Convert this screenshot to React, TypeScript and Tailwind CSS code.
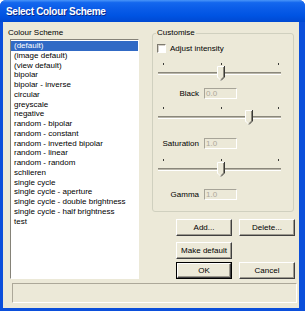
import React from "react";

const items = [
  "(default)",
  "(image default)",
  "(view default)",
  "bipolar",
  "bipolar - inverse",
  "circular",
  "greyscale",
  "negative",
  "random - bipolar",
  "random - constant",
  "random - inverted bipolar",
  "random - linear",
  "random - random",
  "schlieren",
  "single cycle",
  "single cycle - aperture",
  "single cycle - double brightness",
  "single cycle - half brightness",
  "test",
];

function Thumb({ className }: { className: string }) {
  return (
    <svg className={`absolute top-[4px] ${className}`} width="8" height="15" viewBox="0 0 8 15">
      <polygon points="0.5,0.5 7.5,0.5 7.5,11 4,14.5 0.5,11" fill="#ECE9D8" />
      <polyline points="0.5,11.5 0.5,0.5 7,0.5" fill="none" stroke="#ffffff" strokeWidth="1" />
      <polyline points="0.5,11 4,14.5" fill="none" stroke="#ffffff" strokeWidth="1" />
      <polyline points="6.5,1 6.5,11 4,13.5" fill="none" stroke="#8a877b" strokeWidth="1" />
      <polyline points="7.5,0 7.5,11 4,14.5" fill="none" stroke="#3a3a36" strokeWidth="1" />
    </svg>
  );
}

function Slider({ thumbClass }: { thumbClass: string }) {
  return (
    <div className="relative ml-[5px] h-[20px] w-[123px] shrink-0">
      <div className="absolute left-[5px] top-[1px] h-[2px] w-[1px] bg-[#3c3c38]" />
      <div className="absolute left-[63px] top-[1px] h-[2px] w-[1px] bg-[#3c3c38]" />
      <div className="absolute left-[120px] top-[1px] h-[2px] w-[1px] bg-[#3c3c38]" />
      <div className="absolute left-0 right-0 top-[10px] h-[3px] border-t border-t-[#8a877b] border-b border-b-white bg-[#b9b6a9]" />
      <Thumb className={thumbClass} />
    </div>
  );
}

function ValueRow({ label, value, className }: { label: string; value: string; className: string }) {
  return (
    <div className={`flex h-[11px] items-center ${className}`}>
      <div className="w-[46px] text-right leading-[10px]">{label}</div>
      <div className="ml-[5px] flex h-[11px] w-[33px] items-center border-t border-l border-t-[#a7a498] border-l-[#a7a498] border-r border-b border-r-white border-b-white bg-[#ECE9D8] pl-[1px] leading-[9px] text-[#aca899]">
        {value}
      </div>
    </div>
  );
}

function Button({ children, isDefault }: { children: React.ReactNode; isDefault?: boolean }) {
  if (isDefault) {
    return (
      <div className="h-[17px] w-[56px] border border-black">
        <div className="flex h-full w-full items-center justify-center border-t border-l border-t-white border-l-white border-r border-b border-r-[#404040] border-b-[#404040] bg-[#ECE9D8] leading-[10px] shadow-[inset_-1px_-1px_0_#9d9a8f]">
          {children}
        </div>
      </div>
    );
  }
  return (
    <div className="flex h-[17px] w-[56px] items-center justify-center border-t border-l border-t-white border-l-white border-r border-b border-r-[#404040] border-b-[#404040] bg-[#ECE9D8] leading-[10px] shadow-[inset_-1px_-1px_0_#9d9a8f]">
      {children}
    </div>
  );
}

export default function App() {
  return (
    <div className="flex h-[311px] w-[305px] flex-col overflow-hidden rounded-t-[6px] bg-[#0b4fdb] text-[8px] text-black [font-family:'Liberation_Sans',Arial,sans-serif]">
      <div className="flex h-[22px] shrink-0 items-center bg-[linear-gradient(to_bottom,#4a95f8_0%,#1467ee_12%,#0a5ce8_40%,#0054e3_70%,#0049d2_100%)] pl-[6px] pt-[1px]">
        <span className="text-[10px] font-bold tracking-[-0.3px] text-white [text-shadow:1px_1px_0_#0a2a8a]">
          Select Colour Scheme
        </span>
      </div>
      <div className="mb-[3px] ml-[3px] mr-[6px] flex flex-1 flex-col bg-[#ECE9D8] pl-[5px] pt-[6px]">
        <div className="flex items-start">
          <div className="flex w-[131px] flex-col">
            <div className="h-[10px] leading-[10px]">Colour Scheme</div>
            <div className="ml-[2px] mt-[1px] h-[240px] w-[129px] border-t border-l border-t-[#858278] border-l-[#858278] border-r border-b border-r-white border-b-white bg-white pt-[1px]">
              {items.map((it, i) => (
                <div
                  key={it}
                  className={
                    i === 0
                      ? "h-[9.78px] bg-[#316ac5] pl-[3px] leading-[9.78px] whitespace-nowrap text-white"
                      : "h-[9.78px] pl-[3px] leading-[9.78px] whitespace-nowrap"
                  }
                >
                  {it}
                </div>
              ))}
            </div>
          </div>
          <div className="ml-[13px] mt-[5px] flex w-[144px] flex-col">
            <div className="relative flex h-[179px] w-[142px] flex-col rounded-[3px] border border-[#d0d0bf]">
              <div className="absolute left-[3px] top-[-6px] bg-[#ECE9D8] px-[1px] leading-[10px]">Customise</div>
              <div className="ml-[4px] mt-[10px] flex h-[9px] items-center">
                <div className="h-[9px] w-[9px] border-t border-l border-t-[#7e7b70] border-l-[#7e7b70] border-r border-b border-r-white border-b-white bg-white shadow-[inset_1px_1px_0_#d4d0c8]" />
                <div className="ml-[4px] leading-[10px]">Adjust intensity</div>
              </div>
              <div className="mt-[9px]">
                <Slider thumbClass="left-[59px]" />
              </div>
              <ValueRow label="Black" value="0.0" className="mt-[6px]" />
              <div className="mt-[7px]">
                <Slider thumbClass="left-[87px]" />
              </div>
              <ValueRow label="Saturation" value="1.0" className="mt-[12px]" />
              <div className="mt-[9px]">
                <Slider thumbClass="left-[59px]" />
              </div>
              <ValueRow label="Gamma" value="1.0" className="mt-[11px]" />
            </div>
            <div className="ml-[24px] mt-[7px] grid grid-cols-[56px_56px] gap-x-[7px]">
              <Button>Add...</Button>
              <Button>Delete...</Button>
              <div className="mt-[6px]">
                <Button>Make default</Button>
              </div>
              <div />
              <div className="mt-[3px]">
                <Button isDefault>OK</Button>
              </div>
              <div className="mt-[3px]">
                <Button>Cancel</Button>
              </div>
            </div>
          </div>
        </div>
        <div className="ml-[4px] mt-[4px] h-[20px] w-[285px] border-t border-l border-t-[#aca899] border-l-[#aca899] border-r border-b border-r-white border-b-white" />
      </div>
    </div>
  );
}
